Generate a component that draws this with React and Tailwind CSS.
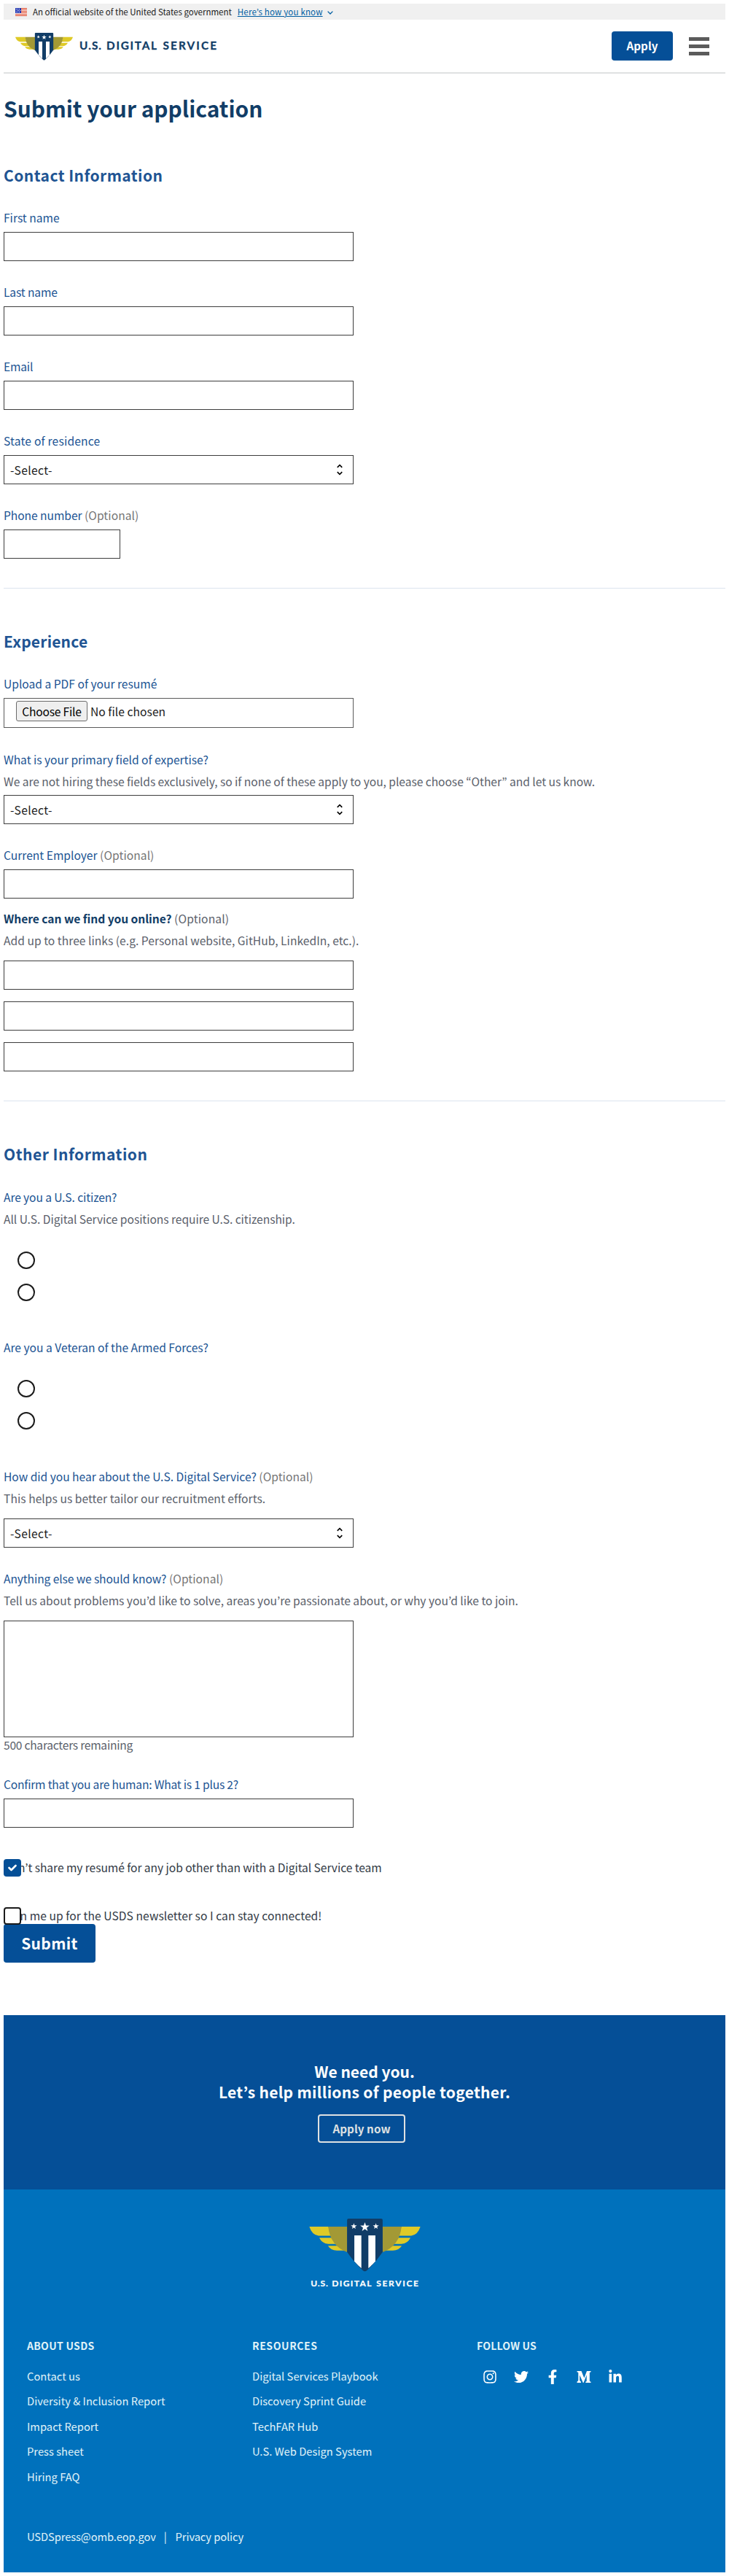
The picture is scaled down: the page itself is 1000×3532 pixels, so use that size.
import React from "react";
import { MdUnfoldMore } from "react-icons/md";
import { FaInstagram, FaTwitter, FaFacebookF, FaLinkedinIn } from "react-icons/fa";

const STAR = "M0-1 .235-.324 .951-.309 .38 .124 .588 .809 0 .4-.588 .809-.38 .124-.951-.309-.235-.324Z";

function Wing() {
  return (
    <g>
      <path d="M72 99H151Q153 120 163 137H110Q82 132 72 99Z" fill="#dfca27" />
      <path d="M113 145H168Q176 160 187 171H150Q124 168 113 145Z" fill="#dfca27" />
      <path d="M149 178H194Q208 190 224 198H186Q160 196 149 178Z" fill="#dfca27" />
      <path d="M150 99H229V205Q158 178 150 99Z" fill="#a39935" />
    </g>
  );
}

function Emblem({ className }) {
  return (
    <svg viewBox="72 66 459 220" className={className} aria-hidden="true">
      <Wing />
      <g transform="translate(603 0) scale(-1 1)">
        <Wing />
      </g>
      <path d="M234 66H369Q375 66 375 72V204Q345 248 309 281Q301.500 287 294 281Q258 248 228 204V72Q228 66 234 66Z" fill="#113d67" />
      <path d="M258 135H287V271Q272 258 258 242Z" fill="#fff" />
      <path d="M345 135H316V271Q331 258 345 242Z" fill="#fff" />
      <path d={STAR} transform="translate(256 98) scale(13)" fill="#fff" />
      <path d={STAR} transform="translate(301.500 101) scale(20)" fill="#fff" />
      <path d={STAR} transform="translate(347 98) scale(13)" fill="#fff" />
    </svg>
  );
}

function Wordmark({ className, color }) {
  return (
    <svg viewBox="0 0 187 14" className={className} fill={color} stroke={color} strokeWidth="0.300" fontFamily="Lato" fontWeight="700" fontSize="15.300">
      <text x="-1" y="12" textLength="30">U.S.</text>
      <text x="36" y="12" textLength="69">DIGITAL</text>
      <text x="113.500" y="12" textLength="73.500">SERVICE</text>
    </svg>
  );
}

function Flag() {
  return (
    <svg viewBox="0 0 16 11" className="h-[11px] w-4" shapeRendering="crispEdges" aria-hidden="true">
      <path d="M0 0H16V11H0Z" fill="#fff" />
      <path d="M0 0H16V1H0ZM0 2H16V3H0ZM0 4H16V5H0ZM0 6H16V7H0ZM0 8H16V9H0ZM0 10H16V11H0Z" fill="#db3e1f" />
      <path d="M0 0H8V7H0Z" fill="#1e33b1" />
      <path d="M1 1h1v1H1zM3 1h1v1H3zM5 1h1v1H5zM2 3h1v1H2zM4 3h1v1H4zM6 3h1v1H6zM1 5h1v1H1zM3 5h1v1H3zM5 5h1v1H5z" fill="#fff" />
    </svg>
  );
}

function Label({ children, optional, className = "tracking-normal" }) {
  return (
    <div className={"h-6 whitespace-nowrap leading-6 text-[#205493] " + className}>
      {children}
      {optional && <span className="tracking-[0.05px] text-[#757575]"> (Optional)</span>}
    </div>
  );
}

function Hint({ children, className = "tracking-[-0.03px]" }) {
  return <div className={"mt-1.5 h-6 whitespace-nowrap leading-6 text-[#5b616b] " + className}>{children}</div>;
}

function Box({ className }) {
  return <input className={"block h-10 border border-[#3d3d3d] bg-white " + className} />;
}

function Select({ className }) {
  return (
    <div className={"flex h-10 w-[480px] items-center justify-between border border-[#3d3d3d] pl-2 pr-2 " + className}>
      <span className="leading-6 tracking-[0.4px] text-[#1b1b1b]">-Select-</span>
      <MdUnfoldMore className="size-5 text-black" />
    </div>
  );
}

function SectionTitle({ children, className }) {
  return <h2 className={"h-8 text-[21px] font-bold leading-8 text-[#205493] " + className}>{children}</h2>;
}

function Radios({ className }) {
  return (
    <div className={"ml-[19px] flex flex-col gap-5 " + className}>
      <div className="size-6 rounded-full border-2 border-[#1b1b1b]" />
      <div className="size-6 rounded-full border-2 border-[#1b1b1b]" />
    </div>
  );
}

function FooterList({ title, titleClass, links, className }) {
  return (
    <div className={className}>
      <div className={"h-6 text-[14px] font-bold leading-6 text-[#e1f3f8] " + titleClass}>{title}</div>
      <ul className="mt-[18px]">
        {links.map((l) => (
          <li key={l} className="h-[34.400px] whitespace-nowrap text-[14.7px] leading-6 tracking-[0.03px] text-[#e1f3f8]">{l}</li>
        ))}
      </ul>
    </div>
  );
}

export default function App() {
  return (
    <div className="h-[3532px] w-[1000px] bg-white p-[5px] font-['Noto_Sans_CJK_KR',sans-serif] text-[15.6px]">
      <div className="flex h-[22px] items-center bg-[#f0f0f0] pl-4 text-[11.5px] text-[#1b1b1b]">
        <Flag />
        <span className="ml-2 whitespace-nowrap leading-5">An official website of the United States government</span>
        <span className="ml-2 whitespace-nowrap leading-5 tracking-[0.17px] text-[#005ea2] underline">Here’s how you know</span>
        <svg viewBox="0 0 8 5" className="ml-1.5 mt-0.5 h-[5px] w-2" aria-hidden="true">
          <path d="M.6.6 4 4 7.400.6" fill="none" stroke="#005ea2" strokeWidth="1.300" />
        </svg>
      </div>

      <header className="flex h-[74px] items-start border-b-2 border-[#dfe1e2] pl-4">
        <Emblem className="mt-[18px] h-[38px] w-[79px]" />
        <Wordmark className="ml-2.5 mt-[29px] h-3.5 w-[187px] overflow-visible" color="#113d67" />
        <div className="ml-auto mt-4 h-10 w-[84px] rounded bg-[#054f97] text-center text-[15.2px] font-bold leading-[38px] text-white">Apply</div>
        <div className="ml-[22px] mr-[22px] mt-6 flex flex-col gap-[5.500px]">
          <div className="h-[4.500px] w-7 bg-[#5b5b5b]" />
          <div className="h-[4.500px] w-7 bg-[#5b5b5b]" />
          <div className="h-[4.500px] w-7 bg-[#5b5b5b]" />
        </div>
      </header>

      <h1 className="mt-[25px] h-11 text-[29.900px] font-bold leading-[44px] text-[#113d67]">Submit your application</h1>

      <SectionTitle className="mt-[54px] tracking-[0.45px]">Contact Information</SectionTitle>
      <div className="mt-[30px] flex flex-col gap-[30px]">
        <div><Label>First name</Label><Box className="mt-2 w-[480px]" /></div>
        <div><Label className="tracking-[-0.12px]">Last name</Label><Box className="mt-2 w-[480px]" /></div>
        <div><Label className="tracking-[-0.2px]">Email</Label><Box className="mt-2 w-[480px]" /></div>
        <div><Label className="tracking-[0.2px]">State of residence</Label><Select className="mt-2" /></div>
        <div><Label optional className="tracking-[-0.06px]">Phone number</Label><Box className="mt-2 w-40" /></div>
      </div>
      <hr className="mt-10 h-px border-0 bg-[#dce4ef]" />

      <SectionTitle className="mt-14 tracking-[0.2px]">Experience</SectionTitle>
      <div className="mt-[30px]">
        <Label>Upload a PDF of your resumé</Label>
        <div className="mt-2 flex h-[41px] w-[480px] items-start border border-[#5b5b5b] pl-4 pt-[3px]">
          <span className="h-7 w-[98px] rounded-[3px] border border-[#6b6b6b] bg-[#efefef] text-center leading-[26px] tracking-[-0.2px] text-black">Choose File</span>
          <span className="ml-1 whitespace-nowrap leading-7 tracking-[0.05px] text-[#1b1b1b]">No file chosen</span>
        </div>
      </div>
      <div className="mt-[31px]">
        <Label className="tracking-[-0.02px]">What is your primary field of expertise?</Label>
        <Hint className="tracking-[-0.04px]">We are not hiring these fields exclusively, so if none of these apply to you, please choose “Other” and let us know.</Hint>
        <Select className="mt-[7px]" />
      </div>
      <div className="mt-[30px]"><Label optional>Current Employer</Label><Box className="mt-2 w-[480px]" /></div>
      <div className="mt-[15px]">
        <div className="h-6 whitespace-nowrap leading-6 tracking-[0.12px] text-[#5b616b]"><b className="tracking-[-0.04px] text-[#113d67]">Where can we find you online?</b> (Optional)</div>
        <Hint className="tracking-[0.03px]">Add up to three links (e.g. Personal website, GitHub, LinkedIn, etc.).</Hint>
        <div className="mt-4 flex flex-col gap-4">
          <Box className="w-[480px]" />
          <Box className="w-[480px]" />
          <Box className="w-[480px]" />
        </div>
      </div>
      <hr className="mt-10 h-px border-0 bg-[#dce4ef]" />

      <SectionTitle className="mt-14 tracking-[0.5px]">Other Information</SectionTitle>
      <div className="mt-[31px]">
        <Label className="tracking-[-0.1px]">Are you a U.S. citizen?</Label>
        <Hint className="tracking-[-0.05px]">All U.S. Digital Service positions require U.S. citizenship.</Hint>
        <Radios className="mt-[33px]" />
      </div>
      <div className="mt-[51px]">
        <Label>Are you a Veteran of the Armed Forces?</Label>
        <Radios className="mt-[33px]" />
      </div>
      <div className="mt-[52px]">
        <Label optional className="tracking-[-0.02px]">How did you hear about the U.S. Digital Service?</Label>
        <Hint className="tracking-[0.05px]">This helps us better tailor our recruitment efforts.</Hint>
        <Select className="mt-4" />
      </div>
      <div className="mt-[30px]">
        <Label optional className="tracking-[-0.1px]">Anything else we should know?</Label>
        <Hint className="tracking-[-0.01px]">Tell us about problems you’d like to solve, areas you’re passionate about, or why you’d like to join.</Hint>
        <textarea className="mt-4 block h-40 w-[480px] resize-none border border-[#3d3d3d]" />
        <div className="-mt-0.5 h-6 leading-6 tracking-[-0.25px] text-[#5b616b]">500 characters remaining</div>
      </div>
      <div className="mt-[30px]"><Label className="tracking-[-0.2px]">Confirm that you are human: What is 1 plus 2?</Label><Box className="mt-2 w-[480px]" /></div>
      <div className="relative mt-[42px] h-6 whitespace-nowrap leading-6 tracking-[-0.06px] text-[#323a45]">
        Don’t share my resumé for any job other than with a Digital Service team
        <div className="absolute left-0 top-px flex size-6 items-center justify-center rounded bg-[#054f97]">
          <svg viewBox="0 0 12 10" className="h-2.5 w-3" aria-hidden="true">
            <path d="M1.500 5 4.500 8 10.500 2" fill="none" stroke="#fff" strokeWidth="2.600" strokeLinecap="round" strokeLinejoin="round" />
          </svg>
        </div>
      </div>
      <div className="relative mt-[42px] h-6 whitespace-nowrap leading-6 tracking-[0.07px] text-[#323a45]">
        Sign me up for the USDS newsletter so I can stay connected!
        <div className="absolute left-0 top-px size-6 rounded border-2 border-[#1b1b1b] bg-white" />
      </div>
      <div className="h-[53px] w-[126px] rounded bg-[#054f97] text-center text-[21px] font-bold leading-[52px] tracking-[0.37px] text-white">Submit</div>

      <section className="mt-[72px] flex h-[239px] flex-col items-center bg-[#054f97] pt-[63px] text-white">
        <div className="whitespace-nowrap text-center text-[21px] font-bold leading-7">We need you.<br /><span className="tracking-[0.31px]">Let’s help millions of people together.</span></div>
        <div className="mr-2 mt-[17px] h-[39px] w-[120px] rounded border-2 border-[#dfe1e2] text-center text-[15.2px] font-bold leading-[34px] tracking-[0.08px] text-[#dfe1e2]">Apply now</div>
      </section>

      <footer className="h-[525px] bg-[#0071bc] pt-10">
        <div className="flex flex-col items-center pl-px">
          <Emblem className="h-[73px] w-[153px]" />
          <Wordmark className="mb-1 mt-[11px] h-[11px] w-[149px] overflow-visible" color="#fff" />
        </div>
        <div className="mt-[63px] flex h-[214px] pl-8">
          <FooterList className="w-[309px]" title="ABOUT USDS" titleClass="tracking-[0.3px]" links={["Contact us", "Diversity & Inclusion Report", "Impact Report", "Press sheet", "Hiring FAQ"]} />
          <FooterList className="w-[308px]" title="RESOURCES" titleClass="tracking-[0.6px]" links={["Digital Services Playbook", "Discovery Sprint Guide", "TechFAR Hub", "U.S. Web Design System"]} />
          <div>
            <div className="h-6 text-[14px] font-bold leading-6 tracking-[0.2px] text-[#e1f3f8]">FOLLOW US</div>
            <div className="ml-2 mt-[21px] flex items-center gap-[23px] text-white">
              <FaInstagram className="size-5" />
              <FaTwitter className="size-5" />
              <FaFacebookF className="size-5" />
              <svg viewBox="0 0 20 20" className="size-5" fill="currentColor" aria-hidden="true">
                <path d="M.500 2H6.500L10.300 11.500 14 2H19.500V3.200L17.800 4V16L19.500 16.800V18H12.300V16.800L13.700 16V7.200L9.500 18H8.800L4.200 7.400V15L6 16.800V18H.500V16.800L2.300 15V4L.500 3.200Z" />
              </svg>
              <FaLinkedinIn className="size-5" />
            </div>
          </div>
        </div>
        <div className="mt-[48px] flex pl-8 text-[14.7px] leading-6 tracking-[-0.08px] text-[#e1f3f8]">
          <span>USDSpress@omb.eop.gov</span>
          <span className="ml-[11px] mr-3">|</span>
          <span>Privacy policy</span>
        </div>
      </footer>
    </div>
  );
}
